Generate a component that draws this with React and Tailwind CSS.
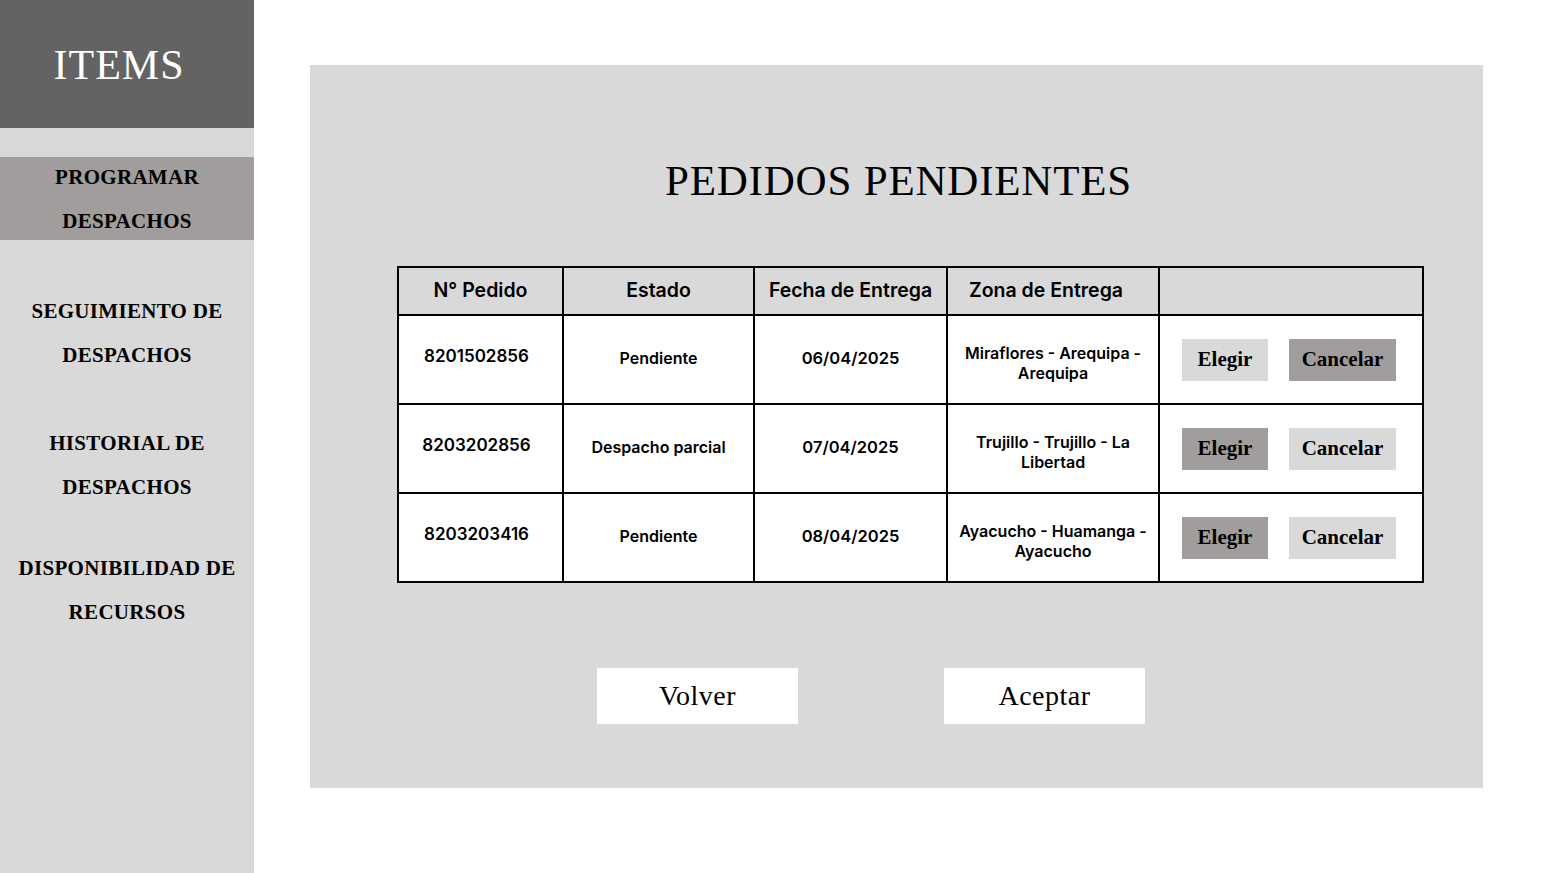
const serif = { fontFamily: '"Liberation Serif", "DejaVu Serif", serif' }

const NAV = [
  { lines: ['PROGRAMAR', 'DESPACHOS'], active: true, gap: 'mb-[49px]' },
  { lines: ['SEGUIMIENTO DE', 'DESPACHOS'], gap: 'mb-[44px]' },
  { lines: ['HISTORIAL DE', 'DESPACHOS'], gap: 'mb-[37px]' },
  { lines: ['DISPONIBILIDAD DE', 'RECURSOS'], gap: '' },
]

const ROWS = [
  { id: '8201502856', estado: 'Pendiente', fecha: '06/04/2025', zona: ['Miraflores - Arequipa -', 'Arequipa'], elegido: false },
  { id: '8203202856', estado: 'Despacho parcial', fecha: '07/04/2025', zona: ['Trujillo - Trujillo - La', 'Libertad'], elegido: true },
  { id: '8203203416', estado: 'Pendiente', fecha: '08/04/2025', zona: ['Ayacucho - Huamanga -', 'Ayacucho'], elegido: true },
]

function Sidebar() {
  return (
    <aside className="w-[254px] shrink-0 bg-[#d9d9d9] flex flex-col" style={serif}>
      <div className="h-[128px] bg-[#636363] flex items-center justify-center">
        <span className="text-white text-[42px] tracking-[1px] pr-[16px] pt-[2px]">ITEMS</span>
      </div>
      <nav className="mt-[29px] flex flex-col">
        {NAV.map((item, i) => (
          <div
            key={i}
            className={
              'text-center font-bold text-[21px] tracking-[0.3px] leading-[44px] text-black ' +
              (item.active ? 'bg-[#a29d9d] h-[83px] flex flex-col justify-center ' : '') +
              item.gap
            }
          >
            {item.lines.map(l => <div key={l}>{l}</div>)}
          </div>
        ))}
      </nav>
    </aside>
  )
}

function Cell({ children, className = '' }) {
  return (
    <td className={'border-2 border-black text-center align-middle ' + className}>
      {children}
    </td>
  )
}

export default function App() {
  return (
    <div className="w-[1560px] h-[873px] flex bg-white overflow-hidden">
      <Sidebar />
      <main className="flex-1 pl-[56px] pt-[65px]">
        <section className="w-[1173px] h-[723px] bg-[#d9d9d9] flex flex-col items-center">
          <h1 className="mt-[94px] text-[43px] tracking-[0.8px] text-black leading-none pl-[4px]" style={serif}>
            PEDIDOS PENDIENTES
          </h1>
          <table
            className="mt-[64px] ml-[28px] border-collapse w-[1027px] text-black"
            style={{ fontFamily: 'Inter, "Noto Sans", sans-serif' }}
          >
            <thead>
              <tr className="h-[48px] bg-[#d9d9d9] text-[19.5px] font-semibold">
                <Cell className="w-[165px]">N° Pedido</Cell>
                <Cell className="w-[191px]">Estado</Cell>
                <Cell className="w-[193px]">Fecha de Entrega</Cell>
                <Cell className="w-[212px] pr-[14px]">Zona de Entrega</Cell>
                <Cell></Cell>
              </tr>
            </thead>
            <tbody className="bg-white font-semibold">
              {ROWS.map(r => (
                <tr key={r.id} className="h-[89px]">
                  <Cell className="text-[17px] pr-[8px] pb-[6px]">{r.id}</Cell>
                  <Cell className="text-[16px] pb-[3px]">{r.estado}</Cell>
                  <Cell className="text-[16.5px] pb-[2px]">{r.fecha}</Cell>
                  <Cell className="text-[16px] leading-[20px] pt-[6px]">
                    {r.zona.map(z => <div key={z}>{z}</div>)}
                  </Cell>
                  <Cell>
                    <div className="flex items-center justify-start gap-[21px] pl-[22px]" style={serif}>
                      <button className={'w-[86px] h-[42px] text-[21px] font-bold ' + (r.elegido ? 'bg-[#a29d9d]' : 'bg-[#d9d9d9]')}>
                        Elegir
                      </button>
                      <button className={'w-[107px] h-[42px] text-[21px] font-bold ' + (r.elegido ? 'bg-[#d9d9d9]' : 'bg-[#a29d9d]')}>
                        Cancelar
                      </button>
                    </div>
                  </Cell>
                </tr>
              ))}
            </tbody>
          </table>
          <div className="mt-[85px] flex gap-[146px] mr-[51px]" style={serif}>
            <button className="w-[201px] h-[56px] bg-white text-[28px] text-black tracking-[0.5px]">Volver</button>
            <button className="w-[201px] h-[56px] bg-white text-[28px] text-black tracking-[0.5px]">Aceptar</button>
          </div>
        </section>
      </main>
    </div>
  )
}
